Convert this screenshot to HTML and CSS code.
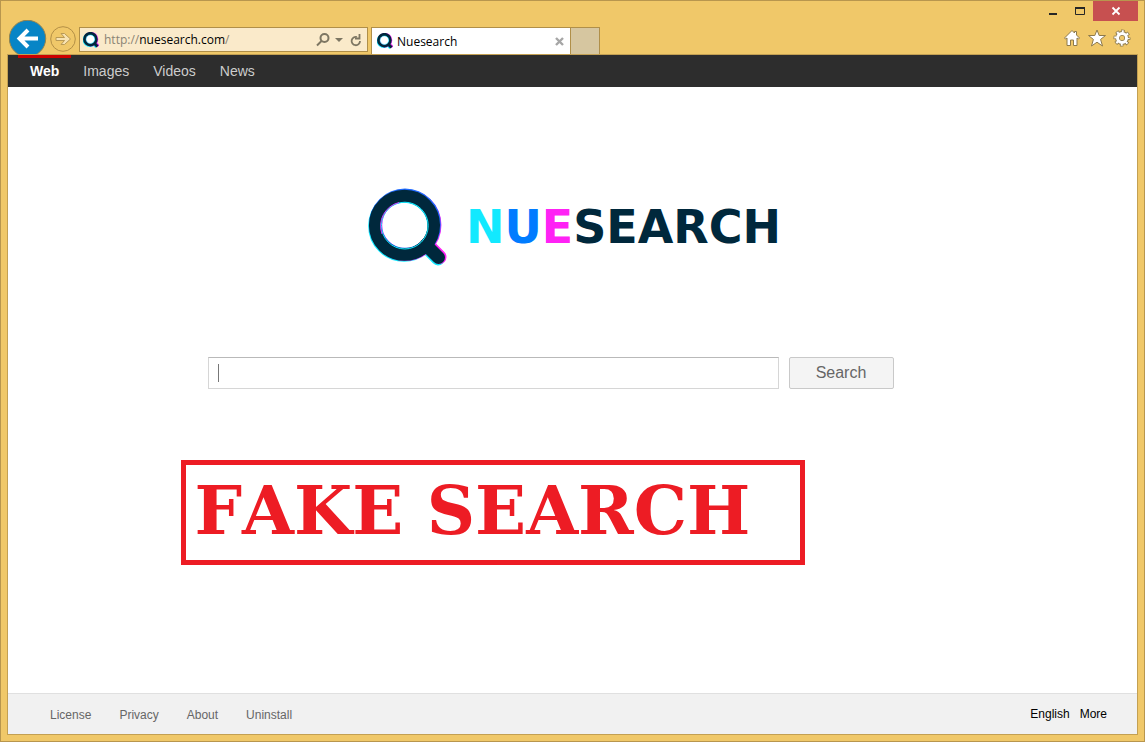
FILE: index.html
```html
<!DOCTYPE html>
<html lang="en">
<head>
<meta charset="utf-8">
<title>Nuesearch</title>
<link rel="stylesheet" href="styles.css">
</head>
<body>
<svg class="defs" width="0" height="0" aria-hidden="true">
  <symbol id="lens" viewBox="0 0 80 78">
    <g fill="none" stroke-width="12.5">
      <g stroke="#12e9ff"><circle cx="36" cy="38" r="29.600"/><path d="M58 58L70 70.500" stroke-width="14" stroke-linecap="round"/></g>
      <g stroke="#ff22f5"><circle cx="37.600" cy="37" r="29.600"/><path d="M59.500 57L71.500 69" stroke-width="14" stroke-linecap="round"/></g>
      <g stroke="#1f6bff"><circle cx="37" cy="36.400" r="29.600"/></g>
      <g stroke="#00283c"><circle cx="36.500" cy="37.300" r="29.300"/><path d="M58 57L70.500 69.500" stroke-width="13" stroke-linecap="round"/></g>
    </g>
    <circle cx="36.800" cy="37.600" r="23.400" fill="none" stroke="#12e9ff"/>
    <path d="M14 46A24 24 0 0 1 31 14.500" fill="none" stroke="#d63bff"/>
  </symbol>
  <symbol id="lens-small" viewBox="0 0 16 16">
    <g fill="none" stroke-width="3">
      <g stroke="#12e9ff"><circle cx="7" cy="7.800" r="5.800"/><path d="M11 12l2.500 3"/></g>
      <g stroke="#f32bf5"><circle cx="8" cy="7.200" r="5.800"/><path d="M12 11l3.500 3"/></g>
      <g stroke="#00283c"><circle cx="7.400" cy="7.200" r="5.800"/><path d="M11 11l3.500 3.500"/></g>
    </g>
    <circle cx="7.400" cy="7.200" r="4.300" fill="#fff" stroke="#12e9ff" stroke-width=".5"/>
  </symbol>
</svg>
<div class="window">
  <header class="chrome">
    <div class="titlebar">
      <button class="wbtn" aria-label="Minimize"><svg width="12" height="12"><path d="M2 8h8v2H2z" fill="#262626"/></svg></button>
      <button class="wbtn" aria-label="Maximize"><svg width="12" height="12"><path d="M1.500 2.500h9v7h-9z" fill="none" stroke="#262626"/><path d="M1 2h10v2H1z" fill="#262626"/></svg></button>
      <button class="wbtn close" aria-label="Close"><svg width="10" height="10"><path d="M1.500 1.500l7 7M8.500 1.500l-7 7" stroke="#fff" stroke-width="1.800"/></svg></button>
    </div>
    <div class="toolbar">
      <button class="back" aria-label="Back"><svg width="38" height="34" viewBox="0 0 38 34"><circle cx="18.500" cy="18.500" r="18.200" fill="#0785c6" stroke="#92834f"/><path d="M29 18.500H11.500M19 10L10.500 18.500l8.500 8.500" fill="none" stroke="#fff" stroke-width="4"/></svg></button>
      <button class="forward" aria-label="Forward"><svg width="26" height="26" viewBox="0 0 26 26"><circle cx="13" cy="13" r="12.300" fill="none" stroke="#b38f46"/><path d="M6 11.500h8.500l-3.500-4h3.500l6 5.500-6 5.500H11l3.500-4H6z" fill="#f8e3b2" stroke="#b99a55"/></svg></button>
      <div class="address">
        <svg class="favicon"><use href="#lens-small"/></svg>
        <span class="url">http://<b>nuesearch.com</b>/</span>
        <button class="find" aria-label="Search address"><svg width="14" height="14" viewBox="0 0 14 14" fill="none" stroke="#7d7662" stroke-width="2"><circle cx="8.500" cy="5" r="4"/><path d="M5.500 8L1 12.500"/></svg></button>
        <button class="drop" aria-label="Show addresses"><svg width="8" height="4"><path d="M0 0h8L4 4z" fill="#7d7662"/></svg></button>
        <button aria-label="Refresh"><svg width="12" height="14" viewBox="0 0 12 14"><path d="M7 4A4.200 4.200 0 1 0 10 8" fill="none" stroke="#7d7662" stroke-width="1.800"/><path d="M9.500 1v4.500H5" fill="none" stroke="#7d7662" stroke-width="1.800"/></svg></button>
      </div>
      <div class="tab">
        <svg class="favicon"><use href="#lens-small"/></svg>
        <span class="tab-title">Nuesearch</span>
        <button aria-label="Close tab"><svg width="9" height="9"><path d="M1 1l7 7M8 1L1 8" stroke="#a6a6a6" stroke-width="2.400"/></svg></button>
      </div>
      <button class="newtab" aria-label="New tab"></button>
      <div class="tools">
        <button aria-label="Home"><svg width="18" height="18" viewBox="0 0 18 18"><path d="M9 1.500l2.500 2.500V2.500h2V6L16.500 9l-1 1-1.500-1v7.500h-3.500V11h-3v5.500H4V9l-1.500 1-1-1z" fill="#fff" stroke="#8d7a4c"/></svg></button>
        <button aria-label="Favorites"><svg width="18" height="18" viewBox="0 0 18 18"><path d="M9 1l2.200 5.500h6.300l-4.900 3.900 1.900 6.600L9 13.200l-5.500 3.800 1.900-6.600L.5 6.500h6.300z" fill="#fff" stroke="#8d7a4c"/></svg></button>
        <button aria-label="Settings"><svg width="18" height="18" viewBox="0 0 18 18"><g fill="none"><circle cx="9" cy="9" r="6.500" stroke="#8d7a4c" stroke-width="4" stroke-dasharray="3.100 2.005" stroke-dashoffset="1.550"/><circle cx="9" cy="9" r="4.600" stroke="#8d7a4c" stroke-width="4.600"/><circle cx="9" cy="9" r="6.500" stroke="#fff" stroke-width="2.400" stroke-dasharray="1.900 3.205" stroke-dashoffset=".950"/><circle cx="9" cy="9" r="4.500" stroke="#fff" stroke-width="3"/></g></svg></button>
      </div>
    </div>
  </header>
  <div class="page">
    <nav class="nav">
      <a class="active" href="#">Web</a><a href="#">Images</a><a href="#">Videos</a><a href="#">News</a>
    </nav>
    <main class="content">
      <h1 class="logo">
        <svg class="mark"><use href="#lens"/></svg>
        <span class="word"><span class="n">N</span><span class="u">U</span><span class="e">E</span>SEARCH</span>
      </h1>
      <div class="column">
        <form class="search">
          <input type="text" aria-label="Search query">
          <button type="button">Search</button>
        </form>
        <p class="warning">FAKE SEARCH</p>
      </div>
    </main>
    <footer class="footer">
      <div class="links"><a href="#">License</a><a href="#">Privacy</a><a href="#">About</a><a href="#">Uninstall</a></div>
      <div class="lang"><a href="#">English</a><a href="#">More</a></div>
    </footer>
  </div>
</div>
</body>
</html>
```

FILE: styles.css
```css
* { box-sizing: border-box; }
body { margin: 0; font-family: "Liberation Sans", Arial, sans-serif; }
button { margin: 0; padding: 0; border: 0; background: none; font: inherit; }
svg { display: block; }
a { color: inherit; text-decoration: none; }
.defs { position: absolute; }

.window {
  display: flex;
  flex-direction: column;
  min-height: 100vh;
  padding: 0 6px 6px;
  border: 1px solid #b8964e;
  background: #f0c869;
}
.titlebar { display: flex; justify-content: flex-end; height: 20px; }
.wbtn { display: grid; place-items: center; width: 27px; }
.close { width: 45px; background: #c75050; }

.toolbar { display: flex; align-items: flex-start; height: 33px; padding-left: 2px; }
.back { height: 34px; margin-top: -1px; overflow: hidden; }
.forward { margin: 5px 3px 0; }
.address, .tab {
  display: flex;
  align-items: center;
  border: 1px solid #b08f49;
  font: 12px "Open Sans", "Noto Sans", sans-serif;
}
.address { width: 289px; height: 25px; margin-top: 6px; padding: 0 5px 0 3px; background: #faeaca; color: #8a8474; }
.address b { color: #000; font-weight: 400; }
.favicon { width: 16px; height: 16px; }
.url { flex: 1; margin-left: 5px; }
.drop { margin: 0 7px 0 5px; }
.tab { width: 200px; height: 27px; margin: 6px 0 0 3px; padding: 0 6px 0 5px; border-bottom: 0; background: #fff; }
.tab-title { flex: 1; margin-left: 4px; }
.newtab { width: 29px; height: 27px; margin-top: 6px; border: 1px solid #b08f49; border-width: 1px 1px 0 0; background: #d6c6a0; }
.tools { display: flex; gap: 7px; margin: 8px 7px 0 auto; }

.page {
  display: flex;
  flex: 1;
  flex-direction: column;
  border: 1px solid #c3a053;
  background: #fff;
}
.nav { display: flex; height: 32px; padding-left: 10px; background: #2d2d2d; color: #ccc; font-size: 14px; line-height: 26px; }
.nav a { padding: 0 12px; border-top: 3px solid transparent; }
.nav .active { border-color: #c00; color: #fff; font-weight: 700; }

.content { display: flex; flex: 1; flex-direction: column; align-items: center; padding-top: 101px; }
.logo { display: flex; align-items: center; gap: 18px; height: 78px; margin: 0; padding-left: 4px; }
.mark { width: 80px; height: 78px; }
.word { color: #00283c; font: 700 46px/1 "DejaVu Sans", sans-serif; }
.n { color: #12e9ff; }
.u { color: #007cff; }
.e { color: #ff22f5; }

.column { width: 730px; max-width: 100%; margin-top: 91px; }
.search { display: flex; gap: 10px; height: 32px; margin-right: 44px; }
.search input {
  flex: 1;
  min-width: 0;
  padding: 0 9px;
  border: 1px solid #d6d6d6;
  border-top-color: #b9b9b9;
  outline: 0;
  background: linear-gradient(#777, #777) 9px 6px / 1px 18px no-repeat #fff;
  font-size: 16px;
}
.search button { width: 105px; border: 1px solid #c9c9c9; border-radius: 2px; background: #f4f4f4; color: #666; font-size: 16px; }
.warning {
  width: 624px;
  height: 105px;
  margin: 71px 0 0 -27px;
  padding-left: 9px;
  border: 5px solid #ed1c24;
  color: #ed1c24;
  font: 700 67px/92px "DejaVu Serif", serif;
  font-kerning: none;
  white-space: nowrap;
}

.footer {
  display: flex;
  justify-content: space-between;
  height: 41px;
  padding: 0 30px 0 42px;
  border-top: 1px solid #e0e0e0;
  background: #f1f1f1;
  color: #666;
  font-size: 12px;
  line-height: 40px;
}
.links { display: flex; gap: 28px; line-height: 42px; }
.lang { display: flex; gap: 10px; color: #000; }
```
